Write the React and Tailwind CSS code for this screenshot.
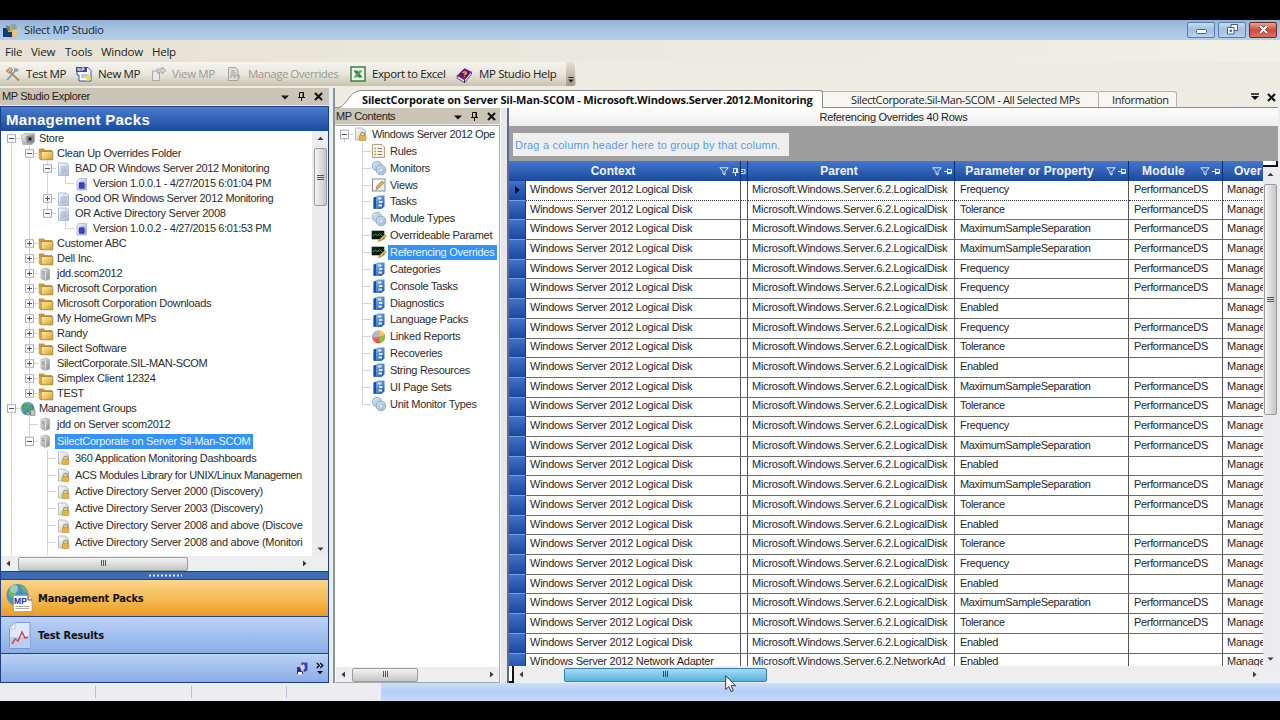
import { useId } from 'react'
import clsx from 'clsx'

const STORE_ROWS = [
  { guides: ['root'], box: '-', icon: 'store', label: 'Store' },
  { guides: ['line', 'tee'], box: '-', icon: 'folder', label: 'Clean Up Overrides Folder' },
  { guides: ['line', 'line', 'tee'], box: '-', icon: 'doc', label: 'BAD OR Windows Server 2012 Monitoring', tight: true },
  { guides: ['line', 'line', 'line', 'end'], icon: 'version', label: 'Version 1.0.0.1 - 4/27/2015 6:01:04 PM', tight: true },
  { guides: ['line', 'line', 'tee'], box: '+', icon: 'doc', label: 'Good OR Windows Server 2012 Monitoring', tight: true },
  { guides: ['line', 'line', 'end'], box: '-', icon: 'doc', label: 'OR Active Directory Server 2008' },
  { guides: ['line', 'line', '', 'end'], icon: 'version', label: 'Version 1.0.0.2 - 4/27/2015 6:01:53 PM', tight: true },
  { guides: ['line', 'tee'], box: '+', icon: 'folder', label: 'Customer ABC' },
  { guides: ['line', 'tee'], box: '+', icon: 'folder', label: 'Dell Inc.' },
  { guides: ['line', 'tee'], box: '+', icon: 'server', label: 'jdd.scom2012' },
  { guides: ['line', 'tee'], box: '+', icon: 'folder', label: 'Microsoft Corporation' },
  { guides: ['line', 'tee'], box: '+', icon: 'folder', label: 'Microsoft Corporation Downloads' },
  { guides: ['line', 'tee'], box: '+', icon: 'folder', label: 'My HomeGrown MPs', tight: true },
  { guides: ['line', 'tee'], box: '+', icon: 'folder', label: 'Randy' },
  { guides: ['line', 'tee'], box: '+', icon: 'folder', label: 'Silect Software' },
  { guides: ['line', 'tee'], box: '+', icon: 'server', label: 'SilectCorporate.SIL-MAN-SCOM', tight: true },
  { guides: ['line', 'tee'], box: '+', icon: 'folder', label: 'Simplex Client 12324' },
  { guides: ['line', 'end'], box: '+', icon: 'folder', label: 'TEST' },
  { guides: ['tee'], box: '-', icon: 'globe', label: 'Management Groups', tight: true },
]

const GROUP_ROWS = [
  { guides: ['line', 'tee'], icon: 'server', label: 'jdd on Server scom2012' },
  { guides: ['line', 'end'], box: '-', icon: 'server', label: 'SilectCorporate on Server Sil-Man-SCOM', selected: true },
  { guides: ['line', '', 'tee'], icon: 'locked', label: '360 Application Monitoring Dashboards' },
  { guides: ['line', '', 'tee'], icon: 'locked', label: 'ACS Modules Library for UNIX/Linux Managemen', tight: true },
  { guides: ['line', '', 'tee'], icon: 'locked', label: 'Active Directory Server 2000 (Discovery)' },
  { guides: ['line', '', 'tee'], icon: 'locked', label: 'Active Directory Server 2003 (Discovery)' },
  { guides: ['line', '', 'tee'], icon: 'locked', label: 'Active Directory Server 2008 and above (Discove' },
  { guides: ['line', '', 'tee'], icon: 'locked', label: 'Active Directory Server 2008 and above (Monitori' },
]

const CONTENT_ROWS = [
  { guides: ['root'], box: '-', icon: 'locked', label: 'Windows Server 2012 Ope', tight: true },
  { guides: ['', 'tee'], icon: 'rules', label: 'Rules' },
  { guides: ['', 'tee'], icon: 'gears', label: 'Monitors' },
  { guides: ['', 'tee'], icon: 'views', label: 'Views' },
  { guides: ['', 'tee'], icon: 'book', label: 'Tasks' },
  { guides: ['', 'tee'], icon: 'gears', label: 'Module Types' },
  { guides: ['', 'tee'], icon: 'override', label: 'Overrideable Paramet' },
  { guides: ['', 'tee'], icon: 'override', label: 'Referencing Overrides', selected: true },
  { guides: ['', 'tee'], icon: 'book', label: 'Categories' },
  { guides: ['', 'tee'], icon: 'book', label: 'Console Tasks' },
  { guides: ['', 'tee'], icon: 'book', label: 'Diagnostics' },
  { guides: ['', 'tee'], icon: 'book', label: 'Language Packs' },
  { guides: ['', 'tee'], icon: 'pie', label: 'Linked Reports' },
  { guides: ['', 'tee'], icon: 'book', label: 'Recoveries' },
  { guides: ['', 'tee'], icon: 'book', label: 'String Resources' },
  { guides: ['', 'tee'], icon: 'book', label: 'UI Page Sets' },
  { guides: ['', 'end'], icon: 'gears', label: 'Unit Monitor Types' },
]

const F = 'Frequency'
const T = 'Tolerance'
const M = 'MaximumSampleSeparation'
const E = 'Enabled'
const PARAMETERS = [F, T, M, M, F, F, E, F, T, E, M, T, F, M, E, M, T, E, T, F, E, M, T, E, E]

const GRID_ROWS = PARAMETERS.map((parameter, i) => {
  const last = i === PARAMETERS.length - 1
  return {
    context: last ? 'Windows Server 2012 Network Adapter' : 'Windows Server 2012 Logical Disk',
    parent: last ? 'Microsoft.Windows.Server.6.2.NetworkAd' : 'Microsoft.Windows.Server.6.2.LogicalDisk',
    parameter,
    module: parameter === E ? '' : 'PerformanceDS',
  }
})

/* ---------- icons ---------- */

const TreeIcon = ({ name }) => {
  const id = useId()
  const fill = `url(#${id})`
  const svg = (stops, children) => (
    <svg className="size-4 shrink-0" viewBox="0 0 16 16">
      <defs>
        <linearGradient id={id} x1="0" y1="0" x2="1" y2="1">
          <stop offset="0" stopColor={stops[0]} />
          <stop offset="1" stopColor={stops[1]} />
        </linearGradient>
      </defs>
      {children}
    </svg>
  )

  switch (name) {
    case 'folder':
      return svg(['#fff3b5', '#d79c20'], (
        <>
          <path d="M1 2.500h5l1 1.500h7v3H1z" fill="#c49a3c" />
          <path d="M1.200 3.500v9l2 1.300V5.800z" fill="#e8c463" stroke="#9c7420" strokeWidth=".6" />
          <path d="M3.200 5.500h11.600v8.300H3.200z" fill={fill} stroke="#9c7420" strokeWidth=".7" />
        </>
      ))
    case 'store':
      return svg(['#f4f4f4', '#8a8a8a'], (
        <>
          <path d="M1 4.500l4-2h9.500v8.500l-3 2.500H3z" fill={fill} stroke="#a5a5a5" strokeWidth=".7" />
          <path d="M6 5l8-1v7l-7 1z" fill="#8a8a8a" />
          <circle cx="10" cy="8" r="1.700" fill="#222" />
        </>
      ))
    case 'doc':
      return svg(['#ffffff', '#a9b9dc'], (
        <>
          <path d="M2.500 2h8l2 2v10.500h-10z" fill={fill} stroke="#a3aec4" strokeWidth=".8" />
          <path d="M4.500 6h6M4.500 8h6M4.500 10h6M4.500 12h4" stroke="#8d9dc0" strokeWidth=".7" />
        </>
      ))
    case 'version':
      return svg(['#eef1fc', '#a3abe2'], (
        <>
          <path d="M3 4.500L5 2.500h7.500V14H3z" fill={fill} stroke="#aab2d8" strokeWidth=".8" />
          <rect x="5" y="6.500" width="5.500" height="6" fill="#2b3096" />
          <path d="M7 5.500v8M9 5.500v8M4.500 8.500h7M4.500 10.500h7" stroke="#4b52c0" strokeWidth=".7" />
        </>
      ))
    case 'server':
      return svg(['#f2f2f2', '#858585'], (
        <>
          <path d="M3 3.500l5-1.500 3.500 1.500v9.500l-4 1.500L3 12.500z" fill={fill} stroke="#a5a5a5" strokeWidth=".7" />
          <path d="M7.500 4.500v9.500" stroke="#dcdcdc" />
          <path d="M4 5.500l2.500.7M4 7.500l2.500.7" stroke="#777" strokeWidth=".8" />
        </>
      ))
    case 'globe':
      return svg(['#8fdcee', '#0f4c66'], (
        <>
          <circle cx="7.500" cy="7.500" r="6.800" fill={fill} />
          <path d="M3 3c3-2 5-1 5 1s-3 2-3 4-3 1-3.500-1S2 4 3 3zM9 6c2-1 4 0 4.500 2S11 12 9 11s-1-4 0-5z" fill="#52a85a" />
          <path d="M10.500 9h4.500v5.500h-4.500z" fill="#c4c7ca" stroke="#6d7175" strokeWidth=".6" />
          <path d="M6 11h3.500v3.500H7z" fill="#9fa6ab" />
        </>
      ))
    case 'locked':
      return svg(['#ffffff', '#b9c1cf'], (
        <>
          <path d="M2.500 2h7l3 3v9h-10z" fill={fill} stroke="#a9afba" strokeWidth=".8" />
          <path d="M7.600 10V8.300a2 2 0 0 1 4 0V10" fill="none" stroke="#b59a55" strokeWidth="1.200" />
          <rect x="6.200" y="9.500" width="6.800" height="5" rx=".8" fill="#e6b342" stroke="#b98620" strokeWidth=".5" />
        </>
      ))
    case 'rules':
      return svg(['#fffdf3', '#f3ead0'], (
        <>
          <path d="M1.500 1.500h9.500l2.500 2.500v10.500h-12z" fill={fill} stroke="#aea286" />
          <path d="M6.500 5.500H11M6.500 8.500H11M6.500 11.500H11" stroke="#8d8266" />
          <path d="M3.500 5.500h1.500M3.500 8.500h1.500M3.500 11.500h1.500" stroke="#c28b30" strokeWidth="1.300" />
        </>
      ))
    case 'gears':
      return svg(['#dbe9f4', '#9cb8d2'], (
        <>
          <circle cx="6" cy="6" r="4.800" fill={fill} stroke="#93aec8" strokeWidth=".9" />
          <circle cx="10" cy="10" r="4.800" fill={fill} stroke="#88a5c2" strokeWidth=".9" />
          <circle cx="10" cy="10" r="2.300" fill="#d3e2ef" stroke="#93aec8" strokeWidth=".6" />
        </>
      ))
    case 'views':
      return svg(['#ffffff', '#e6ecf7'], (
        <>
          <rect x="1.500" y="2" width="12.500" height="12" fill={fill} stroke="#6f7fa5" strokeWidth=".9" />
          <path d="M5 12.500l.8-3.200L11 4l2 1.800L8 11z" fill="#e2b545" stroke="#8a6a2c" strokeWidth=".6" />
        </>
      ))
    case 'book':
      return svg(['#8fc3f0', '#1a52aa'], (
        <>
          <path d="M2.500 3.500L7 1.500h6.500v11l-3 2.500h-8z" fill={fill} />
          <path d="M2.500 3.500v11H5V3z" fill="#1c4f9e" />
          <path d="M7 3.500h3.500v2H7zM8 7h3.500v2H8zM7.500 10.500H11v2H7.500z" fill="#dcebfa" />
        </>
      ))
    case 'override':
      return svg(['#1b2a1d', '#050805'], (
        <>
          <rect x="1" y="3" width="12" height="8" fill={fill} stroke="#111" strokeWidth=".6" />
          <path d="M2 8l2.500-2 2 2 2-2.500L11 8" fill="none" stroke="#49b04f" strokeWidth=".9" />
          <path d="M7.500 13.500l1-2.500 5-4.500 1.800 1.500-5 4.700z" fill="#d8b254" stroke="#6f5622" strokeWidth=".5" />
        </>
      ))
    case 'pie':
      return svg(['#f29a83', '#d5342a'], (
        <>
          <circle cx="7.500" cy="8" r="6.500" fill={fill} />
          <path d="M7.500 8V1.500a6.500 6.500 0 0 1 6.300 5z" fill="#f3c94b" />
          <path d="M7.500 8l6.300-1.500A6.500 6.500 0 0 1 9 14.300z" fill="#86c04c" />
          <path d="M7.500 8H1A6.500 6.500 0 0 1 7.500 1.500z" fill="#a9b8e6" />
        </>
      ))
    default:
      return null
  }
}

const DownArrow = ({ className }) => (
  <svg className={className} viewBox="0 0 8 5"><path d="M0 .5h8L4 4.500z" fill="#111" /></svg>
)

const PinIcon = () => (
  <svg className="h-[9px] w-[7px]" viewBox="0 0 7 9">
    <path d="M1.500.500h4v5h-4zM0 5.500h7M3.500 5.500V9" fill="none" stroke="#111" />
    <path d="M4.500.500h1v5h-1z" fill="#111" />
  </svg>
)

const CloseIcon = () => (
  <svg className="h-[9px] w-[9px]" viewBox="0 0 9 9">
    <path d="M1 1l7 7M8 1L1 8" stroke="#111" strokeWidth="2.100" />
  </svg>
)

const FilterIcon = () => (
  <svg className="h-[9px] w-[10px]" viewBox="0 0 10 9">
    <path d="M.8.800h8.400L6 4.600V8L4 7V4.600z" fill="none" stroke="#e4eeff" />
  </svg>
)

const HeaderPin = ({ upright }) => (
  <svg className={clsx('h-[9px] w-[9px]', upright && 'rotate-[-90deg]')} viewBox="0 0 9 9">
    <path d="M0 4.500h3M3.500 1.500v6M3.500 2.500h4v4h-4M3.500 5.500h4" fill="none" stroke="#e4eeff" />
  </svg>
)

/* ---------- scroll bars ---------- */

const Grip = ({ vertical, color = '#555' }) => (
  <svg className="size-[9px]" viewBox="0 0 9 9">
    <path d={vertical ? 'M1 2.500h7M1 4.500h7M1 6.500h7' : 'M2.500 1v6M4.500 1v6M6.500 1v6'} stroke={color} />
  </svg>
)

const ArrowButton = ({ dir }) => {
  const paths = {
    up: 'M1.500 6h6l-3-3.200z',
    down: 'M1.500 3.500h6l-3 3.200z',
    left: 'M6 1.500v6L2.500 4.500z',
    right: 'M3 1.500v6l3.500-3z',
  }
  return (
    <div className="flex size-[15px] shrink-0 items-center justify-center">
      <svg className="size-[9px]" viewBox="0 0 9 9"><path d={paths[dir]} fill="#3a3a3a" /></svg>
    </div>
  )
}

const VScroll = ({ className, thumb }) => (
  <div className={clsx('flex shrink-0 flex-col items-center bg-[#ececee]', className)}>
    <ArrowButton dir="up" />
    <div className={clsx('flex w-[13px] items-center justify-center rounded-[2px] border border-[#9c9c9c] bg-gradient-to-r from-[#f6f6f6] to-[#c6c6c8]', thumb)}>
      <Grip vertical />
    </div>
    <div className="flex-1" />
    <ArrowButton dir="down" />
  </div>
)

const HScroll = ({ className, thumb, active }) => (
  <div className={clsx('flex shrink-0 items-center bg-[#eeeef0]', className)}>
    <ArrowButton dir="left" />
    <div
      className={clsx(
        'flex h-[14px] items-center justify-center rounded-[2px] border bg-gradient-to-b',
        active ? 'border-[#3c7fa8] from-[#a6dcf5] to-[#56b4de]' : 'border-[#9c9c9c] from-[#f4f4f4] to-[#c6c6c8]',
        thumb
      )}
    >
      <Grip color={active ? '#1d4f73' : '#555'} />
    </div>
    <div className="flex-1" />
    <ArrowButton dir="right" />
  </div>
)

/* ---------- tree ---------- */

const Guide = ({ type, box }) => (
  <svg className="h-full w-[18px] shrink-0" viewBox="0 0 18 16" preserveAspectRatio="none">
    {(type === 'line' || type === 'tee') && <path d="M9.500 0v16" stroke="#d2d2d2" />}
    {type === 'end' && <path d="M9.500 0v8" stroke="#d2d2d2" />}
    {type === 'root' && <path d="M9.500 8v8" stroke="#d2d2d2" />}
    {(type === 'tee' || type === 'end' || type === 'root') && <path d="M9.500 8h8.500" stroke="#d2d2d2" />}
    {box && (
      <>
        <rect x="5.500" y="4" width="8" height="8" fill="#fff" stroke="#a3a9b6" />
        <path d={box === '+' ? 'M7 8h5M9.500 5.500v5' : 'M7 8h5'} stroke="#3d4c78" />
      </>
    )}
  </svg>
)

const TreeRow = ({ row, className, tightClass }) => (
  <div className={clsx('flex shrink-0 items-center', className)}>
    {row.guides.map((type, i) => (
      <Guide key={i} type={type} box={i === row.guides.length - 1 ? row.box : null} />
    ))}
    <TreeIcon name={row.icon} />
    <span
      className={clsx(
        'ml-px flex h-[15px] items-center whitespace-nowrap pl-[2px]',
        row.selected && 'bg-[#3593f5] pr-[3px] text-[#e8f3ff]',
        row.tight && tightClass
      )}
    >
      {row.label}
    </span>
  </div>
)

const PanelHeader = ({ title, className }) => (
  <div className={clsx('flex shrink-0 items-center bg-[#cbc5b8] text-[11px] text-[#222]', className)}>
    <span className="flex-1 tracking-[-0.38px]">{title}</span>
    <div className="flex items-center gap-[9px]">
      <DownArrow className="mt-[2px] h-[5px] w-[8px]" />
      <PinIcon />
      <CloseIcon />
    </div>
  </div>
)

/* ---------- window chrome ---------- */

const TitleBar = () => (
  <div className="flex h-[20px] shrink-0 items-center bg-gradient-to-b from-[#93b4d6] via-[#a9c5e3] to-[#b3cdea] pl-[3px] pr-[3px]">
    <svg className="h-[15px] w-[15px]" viewBox="0 0 15 15">
      <path d="M3 3l6-2 5 3v8l-6 3-5-3z" fill="#d4ab4a" />
      <path d="M8 1h5l1 6-5 2z" fill="#7fa7b5" />
      <path d="M9 7l5-1v6l-5 2z" fill="#e8c667" />
      <path d="M0 5h5v4h4v5H0z" fill="#123a78" />
      <path d="M3 2l4 2v4l-3-1z" fill="#62809a" />
    </svg>
    <span className="ml-[6px] flex-1 text-[11.5px] tracking-[-0.38px] text-[#1c2733]">Silect MP Studio</span>
    <div className="mt-[-1px] flex gap-[3px]">
      <div className="flex h-[16px] w-[28px] items-center justify-center rounded-[2px] border border-[#5d7ba3] bg-gradient-to-b from-[#c6d9f0] via-[#a3bfe0] to-[#b9d1ee]">
        <svg className="mt-[3px] h-[5px] w-[11px]" viewBox="0 0 11 5"><rect x=".5" y=".5" width="10" height="4" rx="1" fill="#fff" stroke="#4d5f7c" /></svg>
      </div>
      <div className="flex h-[16px] w-[28px] items-center justify-center rounded-[2px] border border-[#5d7ba3] bg-gradient-to-b from-[#c6d9f0] via-[#a3bfe0] to-[#b9d1ee]">
        <svg className="h-[11px] w-[11px]" viewBox="0 0 11 11">
          <path d="M4 .5h6.500v6H4z" fill="#fff" stroke="#4d5f7c" />
          <path d="M.5 3.500H7v6.500H.5z" fill="#fff" stroke="#4d5f7c" />
          <path d="M3 6h1.500v1.500H3z" fill="none" stroke="#4d5f7c" />
        </svg>
      </div>
      <div className="flex h-[16px] w-[28px] items-center justify-center rounded-[2px] border border-[#6b2a28] bg-gradient-to-b from-[#e8a196] via-[#cf4a36] to-[#dc7460]">
        <svg className="h-[9px] w-[11px]" viewBox="0 0 11 9">
          <path d="M2 1l7 7M9 1L2 8" stroke="#5b3a3a" strokeWidth="3.200" />
          <path d="M2 1l7 7M9 1L2 8" stroke="#fff" strokeWidth="2.100" />
        </svg>
      </div>
    </div>
  </div>
)

const MenuBar = () => (
  <div className="flex h-[22px] shrink-0 items-center bg-gradient-to-r from-[#e6e2d5] to-[#f1f0e6] pl-[5px] pt-px text-[11.5px] tracking-[-0.25px] text-[#222]">
    <span className="w-[26px]">File</span>
    <span className="w-[34px]">View</span>
    <span className="w-[36px]">Tools</span>
    <span className="w-[51px]">Window</span>
    <span>Help</span>
  </div>
)

const ToolBar = () => (
  <div className="flex h-[26px] shrink-0 bg-[#eeece1] text-[11.5px] text-[#222]">
    <div className="flex h-[24px] w-[576px] items-center rounded-r-[3px] bg-gradient-to-b from-[#f5f4ee] via-[#e9e7dc] to-[#c6c3b0] pl-[5px]">
      <svg className="size-[16px]" viewBox="0 0 16 16">
        <path d="M2 14L11 4" stroke="#7e9ab5" strokeWidth="1.800" />
        <path d="M9 2.500c2-1 4 0 5 2l-2 1.500-3-1.500z" fill="#8aa5bd" />
        <path d="M5 6l9 8.500" stroke="#b08a5c" strokeWidth="1.800" />
        <path d="M1 5l4-3.500 3 2.500-3.500 3.500z" fill="#cfae7a" stroke="#7d6a4a" strokeWidth=".6" />
      </svg>
      <span className="ml-[5px] w-[50px] tracking-[-0.35px]">Test MP</span>
      <svg className="size-[16px]" viewBox="0 0 16 16">
        <path d="M1 1.500h11l3 3V15H3V9H1z" fill="#fff" stroke="#3e4bb0" />
        <path d="M0 1h11v5H0z" fill="#3746b4" />
        <path d="M2 5V2l2 3V2M6 5V2h2v1.500H6" stroke="#fff" strokeWidth=".8" fill="none" />
        <path d="M5 9h8M5 11h8" stroke="#7e89d6" />
        <path d="M9 10l5-1 1 5-4 1z" fill="#f1dc55" />
      </svg>
      <span className="ml-[6px] w-[53px] tracking-[-0.35px]">New MP</span>
      <svg className="size-[16px]" viewBox="0 0 16 16">
        <path d="M1.500 5h7v9.500h-7z" fill="#e6e6e2" stroke="#a9a9a4" />
        <path d="M6 6V3h5V1l4 3.500L11 8V6H8v2z" fill="#d4d4d0" stroke="#9f9f9a" strokeWidth=".8" />
      </svg>
      <span className="ml-[5px] w-[54px] tracking-[-0.35px] text-[#9a9a94]">View MP</span>
      <svg className="size-[16px]" viewBox="0 0 16 16">
        <path d="M2.500 1.500h7l2.500 2.500v10.500H2.500z" fill="#dededb" stroke="#a5a5a0" />
        <path d="M5 5h4M5 7h5M5 12v-3h3v3M9 12V9h4v4" fill="none" stroke="#9d9d99" />
      </svg>
      <span className="ml-[6px] w-[102px] tracking-[-0.5px] text-[#9a9a94]">Manage Overrides</span>
      <svg className="size-[16px]" viewBox="0 0 16 16">
        <rect x="1" y="1" width="14" height="14" fill="#eef5ea" stroke="#347a3a" strokeWidth="1.400" />
        <path d="M3.500 4.500h4l5 7h-4z" fill="#2f8038" />
        <path d="M12.500 4.500h-3l-6 7h3z" fill="#4ea355" />
      </svg>
      <span className="ml-[6px] w-[84px] tracking-[-0.4px]">Export to Excel</span>
      <svg className="size-[17px]" viewBox="0 0 16 16">
        <path d="M1 9l7-7 6.500 3.500L8 13z" fill="#6b1674" />
        <path d="M1 9v2.500L8 15.500V13zM8 13v2.500L14.500 8V5.500z" fill="#efe9f2" stroke="#4a0f52" strokeWidth=".7" />
        <path d="M6.500 6.500c.8-1.600 3.800-1.200 3 .5-.4.700-1.500.800-1.500 1.500M7.400 9.900h.8" fill="none" stroke="#f5c542" strokeWidth="1.300" />
      </svg>
      <span className="ml-[6px] w-[87px] tracking-[-0.36px]">MP Studio Help</span>
      <div className="flex h-full w-[9px] flex-col items-center justify-end rounded-r-[3px] bg-gradient-to-b from-[#e6e3d6] to-[#9f9c88] pb-[3px]">
        <svg className="h-[6px] w-[6px]" viewBox="0 0 6 6"><path d="M.5.500h5" stroke="#222" /><path d="M0 2.500h6L3 5.500z" fill="#222" /></svg>
      </div>
    </div>
  </div>
)

/* ---------- left pane ---------- */

const Explorer = () => (
  <div className="flex w-[329px] shrink-0 flex-col">
    <PanelHeader title="MP Studio Explorer" className="h-[17px] pl-[2px] pr-[6px]" />
    <div className="mt-px flex flex-1 flex-col border border-[#1d3f8c]">
      <div className="flex h-[24px] shrink-0 items-center bg-gradient-to-b from-[#4a7bd0] to-[#1c4a9f] pl-[5px] text-[15px] font-bold tracking-[0.3px] text-white">
        Management Packs
      </div>
      <div className="flex h-[425px] shrink-0 bg-white">
        <div className="flex w-[311px] flex-col overflow-hidden pl-px text-[11px] tracking-[-0.27px] text-[#2b2b2b]">
          {STORE_ROWS.map((row) => (
            <TreeRow key={row.label} row={row} className="h-[15px]" tightClass="tracking-[-0.35px]" />
          ))}
          {GROUP_ROWS.map((row) => (
            <TreeRow key={row.label} row={row} className="h-[16.86px]" tightClass="tracking-[-0.36px]" />
          ))}
          <div className="flex h-[6px] shrink-0">
            <Guide type="line" />
            <Guide />
            <Guide type="line" />
          </div>
        </div>
        <VScroll className="w-[16px]" thumb="mt-[2px] h-[58px]" />
      </div>
      <HScroll className="h-[15px] pr-[16px]" thumb="ml-[2px] w-[170px]" />
      <div className="flex h-[9px] shrink-0 items-center justify-center border-y border-[#1d3f8c] bg-[#3c6bb8]">
        <svg className="h-[3px] w-[34px]" viewBox="0 0 34 3">
          <path d="M1 1.500h33" stroke="#dfeaff" strokeWidth="2" strokeDasharray="2 2" />
        </svg>
      </div>
      <div className="flex h-[37px] shrink-0 items-center border-b border-[#1d3f8c] bg-gradient-to-b from-[#fbd58a] via-[#f6bb55] to-[#eb9b22] pl-[5px] text-[11px] font-bold text-[#111]">
        <svg className="h-[30px] w-[27px]" viewBox="0 0 27 30">
          <circle cx="11.500" cy="12" r="11" fill="#4a93c0" />
          <path d="M3 7c3-5 8-6 9-4s-3 4-2 7-4 5-6 4-2-5-1-7zM14 3c4 0 7 3 8 7l-4-1z" fill="#6cb56c" />
          <circle cx="8" cy="6" r="4" fill="#cfe8ef" opacity=".5" />
          <path d="M7.500 12.500H22l4 4.500v11.500H7.500z" fill="#fff" stroke="#9a9aa8" strokeWidth=".7" />
          <path d="M22 12.500V17h4" fill="#ddd" stroke="#333" strokeWidth=".8" />
          <path d="M9.500 23.500h14M9.500 25.500h14" stroke="#aaa" />
          <text x="8" y="20.500" fontSize="8.500" fontWeight="bold" fill="#2a2f9e" fontFamily="Liberation Sans" textLength="13">MP</text>
        </svg>
        <span className="ml-[5px] font-['DejaVu_Sans_Condensed','Open_Sans',sans-serif] tracking-[-0.17px]">Management Packs</span>
      </div>
      <div className="flex h-[37px] shrink-0 items-center border-b border-[#1d3f8c] bg-gradient-to-b from-[#bcd2f6] to-[#8bade6] pl-[5px] text-[11px] font-bold text-[#111]">
        <svg className="h-[29px] w-[27px]" viewBox="0 0 27 29">
          <path d="M9 1.500h15v26H3.500V8z" fill="#dfe8f8" stroke="#7f99cc" />
          <path d="M9 1.500V8H3.500z" fill="#fff" stroke="#9db0d8" strokeWidth=".7" />
          <path d="M4 16h20v11H4z" fill="#b9cdee" />
          <path d="M6 23l3-5 3 2 4-9 3 6 3-1" fill="none" stroke="#d9444a" strokeWidth="1.500" />
        </svg>
        <span className="ml-[5px] font-['DejaVu_Sans_Condensed','Open_Sans',sans-serif] tracking-[-0.12px]">Test Results</span>
      </div>
      <div className="flex flex-1 items-center justify-end gap-[8px] bg-gradient-to-b from-[#bcd2f6] to-[#8aace6] pr-[4px]">
        <svg className="h-[13px] w-[11px]" viewBox="0 0 11 13">
          <path d="M0 5h6v7H0z" fill="#2b2f9d" />
          <path d="M4 .500h6.500v8L7 10z" fill="#3a44b5" />
          <path d="M3 5l4-3 1 4-3 4z" fill="#e8d3c8" />
          <path d="M1 10h4v2.500H1z" fill="#fff" />
        </svg>
        <svg className="h-[13px] w-[8px]" viewBox="0 0 8 13">
          <path d="M.8 1l2.500 2.500L.8 6M4.200 1l2.500 2.500L4.200 6" fill="none" stroke="#111" strokeWidth="1.400" />
          <path d="M1 9h6l-3 3.200z" fill="#111" />
        </svg>
      </div>
    </div>
  </div>
)

/* ---------- right pane ---------- */

const TabStrip = () => (
  <div className="flex h-[20px] shrink-0 items-end border-b border-[#8d8d88] bg-[#efede3] font-['Open_Sans','Noto_Sans',sans-serif] text-[11px] text-[#222]">
    <svg className="-mb-px ml-[4px] h-[18px] w-[22px]" viewBox="0 0 22 18">
      <path d="M0 18C8 16 10 1 22 .500V18z" fill="#fff" />
      <path d="M0 17.500C8 15.500 10 1 22 .500" fill="none" stroke="#8d8d88" />
    </svg>
    <div className="-mb-px flex h-[18px] w-[462px] items-center rounded-tr-[3px] border-r border-t border-[#8d8d88] bg-white pl-px font-bold tracking-[-0.18px] text-[#111]">
      <span className="whitespace-nowrap">SilectCorporate on Server Sil-Man-SCOM - Microsoft.Windows.Server.2012.Monitoring</span>
    </div>
    <div className="flex h-[16px] w-[276px] items-center rounded-tr-[3px] border-r border-t border-[#b5b3a8] bg-[#f7f6f0] pl-[28px] tracking-[-0.39px]">
      <span className="whitespace-nowrap">SilectCorporate.Sil-Man-SCOM - All Selected MPs</span>
    </div>
    <div className="flex h-[16px] w-[78px] items-center rounded-tr-[3px] border-r border-t border-[#b5b3a8] bg-[#f7f6f0] pl-[13px] tracking-[-0.4px]">
      Information
    </div>
    <div className="flex h-[20px] flex-1 items-center justify-end gap-[8px] pr-[2px]">
      <svg className="h-[8px] w-[8px]" viewBox="0 0 8 8"><path d="M0 1h8" stroke="#111" strokeWidth="1.500" /><path d="M0 3h8L4 7z" fill="#111" /></svg>
      <CloseIcon />
    </div>
  </div>
)

const Contents = () => (
  <div className="flex w-[165px] shrink-0 flex-col">
    <PanelHeader title="MP Contents" className="h-[16px] pl-[1px] pr-[4px]" />
    <div className="mt-px flex flex-1 flex-col overflow-hidden border border-[#a9a9a9] border-l-transparent bg-white">
      <div className="flex flex-1 flex-col overflow-hidden text-[11px] tracking-[-0.27px] text-[#2b2b2b]">
        <div className="-ml-px flex flex-col">
          {CONTENT_ROWS.map((row) => (
            <TreeRow key={row.label} row={row} className="h-[16.86px]" tightClass="tracking-[-0.38px]" />
          ))}
        </div>
      </div>
      <HScroll className="h-[15px]" thumb="ml-px w-[66px]" />
    </div>
  </div>
)

const HEAD = 'flex h-full shrink-0 items-center border-r border-[#0f2c66]'

const GridHeader = () => (
  <div className="flex h-[20px] shrink-0 overflow-hidden bg-gradient-to-b from-[#4577cd] to-[#1b489e] text-[12px] font-bold text-[#eef4ff]">
    <div className={clsx(HEAD, 'w-[232px] gap-[2px]')}>
      <span className="flex-1 text-center">Context</span>
      <FilterIcon />
      <HeaderPin upright />
    </div>
    <div className={clsx(HEAD, 'w-[7px] overflow-hidden')}>
      <svg className="h-[9px] w-[6px]" viewBox="0 0 6 9"><path d="M0 4.500h2M0 2.500h4v4H0" fill="none" stroke="#e4eeff" /></svg>
    </div>
    <div className={clsx(HEAD, 'w-[207px] gap-[2px] pr-px')}>
      <span className="flex-1 text-center">Parent</span>
      <FilterIcon />
      <HeaderPin />
    </div>
    <div className={clsx(HEAD, 'w-[174px] gap-[2px] pr-px')}>
      <span className="flex-1 whitespace-nowrap text-center tracking-[0.08px]">Parameter or Property</span>
      <FilterIcon />
      <HeaderPin />
    </div>
    <div className={clsx(HEAD, 'w-[94px] gap-[2px] pr-px')}>
      <span className="flex-1 text-center tracking-[0.15px]">Module</span>
      <FilterIcon />
      <HeaderPin />
    </div>
    <div className="flex items-center pl-[11px]">Over</div>
  </div>
)

const CELL = 'flex h-full shrink-0 items-center overflow-hidden whitespace-nowrap border-b border-r border-r-[#555] pb-[2px]'

const GridRow = ({ row, current }) => {
  const cell = clsx(CELL, current ? 'border-b-[#333] [border-bottom-style:dotted]' : 'border-b-[#6b6b6b]')
  return (
    <div className="flex h-[19.69px] shrink-0">
      <div className="flex w-[17px] shrink-0 items-center justify-center border-b border-r border-b-[#7f9fd8] border-r-[#16397c] bg-gradient-to-b from-[#3f72c8] to-[#1b489e]">
        {current && <svg className="h-[8px] w-[5px]" viewBox="0 0 5 8"><path d="M0 0v8l5-4z" fill="#081734" /></svg>}
      </div>
      <div className={clsx(cell, 'w-[215px] pl-[4px]')}>{row.context}</div>
      <div className={clsx(cell, 'w-[7px]')} />
      <div className={clsx(cell, 'w-[207px] pl-[4px]')}>{row.parent}</div>
      <div className={clsx(cell, 'w-[174px] pl-[5px] tracking-[-0.33px]')}>{row.parameter}</div>
      <div className={clsx(cell, 'w-[94px] pl-[5px] tracking-[-0.33px]')}>{row.module}</div>
      <div className={clsx(cell, 'w-[41px] border-r-0 pl-[4px]')}>Manage</div>
    </div>
  )
}

const Grid = () => (
  <div className="flex flex-1 flex-col overflow-hidden border-l-2 border-[#5b6d8c]">
    <div className="flex h-[18px] shrink-0 items-center justify-center bg-gradient-to-b from-white to-[#ececec] pt-px text-[11px] tracking-[-0.27px] text-[#222]">
      Referencing Overrides 40 Rows
    </div>
    <div className="flex h-[35px] shrink-0 bg-[#9e9e9e] pl-[4px] pt-[7px]">
      <div className="flex h-[23px] w-[276px] items-center bg-[#efefef] pl-[2px] pt-[2px] text-[11px] tracking-[0.21px] text-[#5a9ddf]">
        Drag a column header here to group by that column.
      </div>
    </div>
    <div className="flex h-[505px] shrink-0">
      <div className="flex w-[754px] shrink-0 flex-col overflow-hidden bg-white">
        <GridHeader />
        <div className="flex flex-col text-[11px] tracking-[-0.24px] text-[#262626]">
          {GRID_ROWS.map((row, i) => (
            <GridRow key={i} row={row} current={i === 0} />
          ))}
        </div>
      </div>
      <div className="flex flex-1 flex-col bg-[#ececee]">
        <div className="h-[6px] border-b-2 border-r-2 border-[#111] bg-white" />
        <VScroll className="flex-1" thumb="mt-[2px] h-[231px]" />
      </div>
    </div>
    <div className="flex flex-1">
      <div className="w-[5px] border-b-2 border-r-2 border-[#111] bg-white" />
      <HScroll className="flex-1 pr-[16px]" thumb="ml-[35px] w-[203px]" active />
    </div>
  </div>
)

const StatusBar = () => (
  <div className="flex h-[18px] shrink-0 bg-[#ececf1]">
    <div className="my-[3px] w-[96px] border-r border-[#b4c3de]" />
    <div className="my-[3px] w-[96px] border-r border-[#b4c3de]" />
    <div className="my-[3px] w-[95px] border-r border-[#b4c3de]" />
    <div className="w-[94px]" />
    <div className="flex-1 bg-gradient-to-b from-[#c9defa] via-[#b5cff8] to-[#c5dafa]" />
  </div>
)

const Cursor = () => (
  <svg className="absolute left-[725px] top-[675px] h-[18px] w-[12px]" viewBox="0 0 12 18">
    <path d="M.7.800v13.700l3.200-3 2.200 5.200 2.200-1-2.200-5h4.500z" fill="#fff" stroke="#222" strokeWidth=".9" />
  </svg>
)

export default function App() {
  return (
    <div className="relative flex h-[720px] w-[1280px] flex-col overflow-hidden bg-black pt-[20px] font-['Liberation_Sans',Arial,sans-serif] leading-none">
      <div className="flex shrink-0 flex-col font-['Open_Sans','Noto_Sans',sans-serif]">
        <TitleBar />
        <MenuBar />
        <ToolBar />
      </div>
      <div className="flex h-[595px] shrink-0 bg-[#e9eef5]">
        <Explorer />
        <div className="ml-[4px] flex flex-1 flex-col border-l-2 border-[#8a93a0] pr-[2px]">
          <TabStrip />
          <div className="flex flex-1 bg-[#eceae4]">
            <Contents />
            <div className="w-[7px] border-l border-white bg-[#e8e8ea]" />
            <Grid />
          </div>
        </div>
      </div>
      <StatusBar />
      <Cursor />
    </div>
  )
}
